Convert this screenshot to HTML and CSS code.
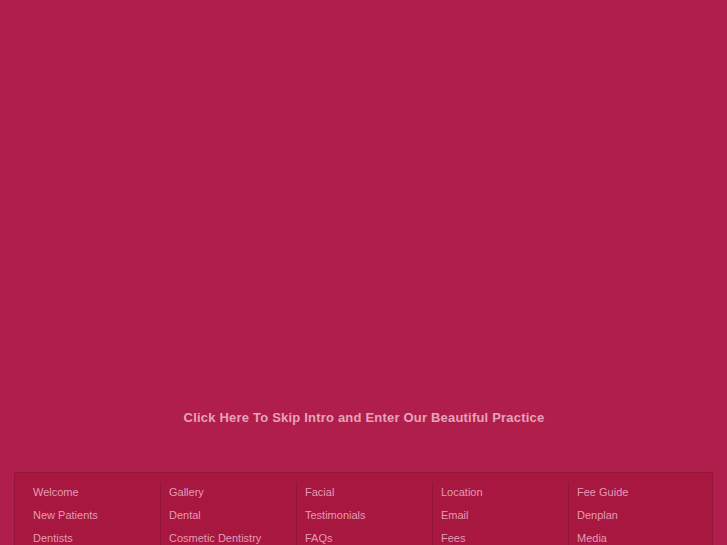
FILE: index.html
```html
<!DOCTYPE html>
<html>
<head>
<meta charset="utf-8">
<title>Intro</title>
<link rel="stylesheet" href="styles.css">
</head>
<body>
<div class="intro">
  <a class="skip" href="#">Click Here To Skip Intro and Enter Our Beautiful Practice</a>
</div>
<div class="footer-nav">
  <ul class="col">
    <li><a href="#">Welcome</a></li>
    <li><a href="#">New Patients</a></li>
    <li><a href="#">Dentists</a></li>
  </ul>
  <ul class="col">
    <li><a href="#">Gallery</a></li>
    <li><a href="#">Dental</a></li>
    <li><a href="#">Cosmetic Dentistry</a></li>
  </ul>
  <ul class="col">
    <li><a href="#">Facial</a></li>
    <li><a href="#">Testimonials</a></li>
    <li><a href="#">FAQs</a></li>
  </ul>
  <ul class="col">
    <li><a href="#">Location</a></li>
    <li><a href="#">Email</a></li>
    <li><a href="#">Fees</a></li>
  </ul>
  <ul class="col">
    <li><a href="#">Fee Guide</a></li>
    <li><a href="#">Denplan</a></li>
    <li><a href="#">Media</a></li>
  </ul>
</div>
</body>
</html>
```
FILE: styles.css
```css
html, body {
  margin: 0;
  padding: 0;
  background: #b01f4b;
  font-family: "Liberation Sans", Arial, sans-serif;
  overflow: hidden;
}
.intro {
  height: 472px;
  box-sizing: border-box;
  padding-top: 406px;
  text-align: center;
}
.skip {
  display: block;
  line-height: 24px;
  font-size: 13px;
  font-weight: bold;
  letter-spacing: 0.2px;
  color: #e7a3bb;
  text-decoration: none;
  padding-left: 1px;
}
.footer-nav {
  margin: 0 14px;
  border: 1px solid #96133a;
  background: #a8173f;
  display: flex;
  padding: 9px 8px 20px 9px;
}
.col {
  list-style: none;
  margin: 0;
  padding: 0 0 0 9px;
  width: 136px;
  box-sizing: border-box;
}
.col + .col {
  border-left: 1px solid #94133a;
  padding-left: 8px;
}
.col li {
  line-height: 21px;
  margin-bottom: 2px;
  font-size: 11px;
}
.col a {
  color: #e39cb6;
  text-decoration: none;
}
```
